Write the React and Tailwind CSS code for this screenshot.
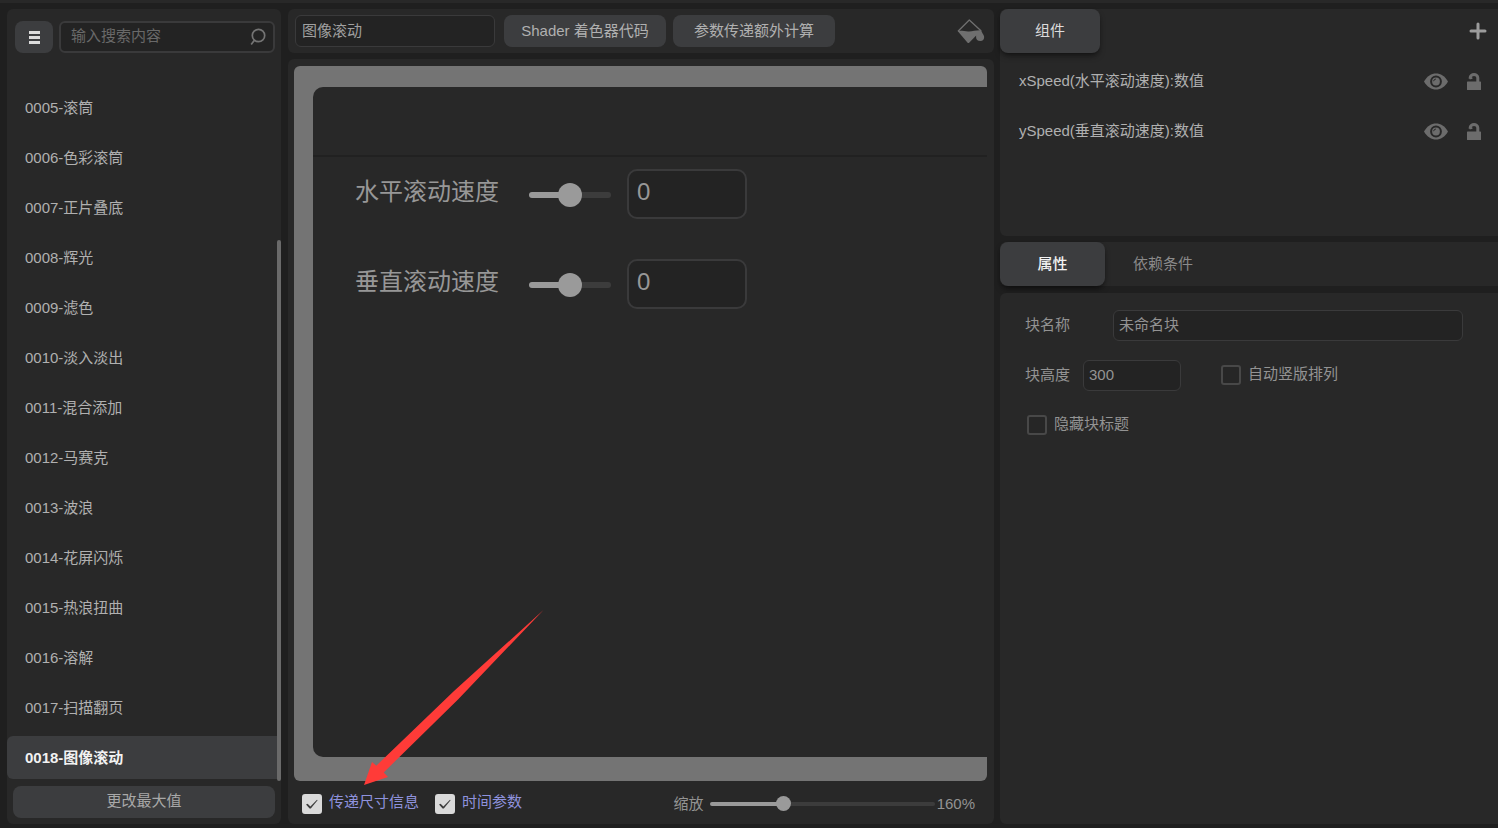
import React, { useState } from "react";

const SHADERS = [
  "0005-滚筒",
  "0006-色彩滚筒",
  "0007-正片叠底",
  "0008-辉光",
  "0009-滤色",
  "0010-淡入淡出",
  "0011-混合添加",
  "0012-马赛克",
  "0013-波浪",
  "0014-花屏闪烁",
  "0015-热浪扭曲",
  "0016-溶解",
  "0017-扫描翻页",
  "0018-图像滚动",
];

const PARAMS = [
  { id: "xSpeed", label: "水平滚动速度" },
  { id: "ySpeed", label: "垂直滚动速度" },
];

const MenuIcon = () => (
  <svg width="11" height="13" viewBox="0 0 11 13" fill="#dcdcdc" aria-hidden="true">
    <rect width="11" height="3" />
    <rect y="5" width="11" height="3" />
    <rect y="10" width="11" height="3" />
  </svg>
);

const SearchIcon = () => (
  <svg width="16" height="18" viewBox="0 0 16 18" fill="none" stroke="#747474" strokeWidth="1.7" aria-hidden="true">
    <circle cx="8.5" cy="7.5" r="6.2" />
    <path d="M4.4 12.2 L1.2 16.4" />
  </svg>
);

const BucketIcon = () => (
  <svg width="28" height="25" viewBox="0 0 28 25" aria-hidden="true">
    <path d="M1 12.2 L12.3 1 L24.2 12" fill="none" stroke="#6f6f6f" strokeWidth="1.3" strokeLinejoin="round" />
    <path
      d="M.6 12 C5 11.4 8 12.6 12 12.4 C16 12.2 19 11 24 11.2 L25.6 14.4 C28.4 17.6 27.2 22 23.4 22 C20 22 18.6 19.8 19.2 16.6 L12.4 23.6 Q11.4 24.6 10.4 23.6 Z"
      fill="#6f6f6f"
    />
  </svg>
);

const PlusIcon = () => (
  <svg width="18" height="18" viewBox="0 0 18 18" fill="none" stroke="#9c9c9c" strokeWidth="3" strokeLinecap="round" aria-hidden="true">
    <path d="M9 2 V16 M2 9 H16" />
  </svg>
);

const EyeIcon = () => (
  <svg width="24" height="17" viewBox="0 0 24 17" aria-hidden="true">
    <path d="M0 8.5 C3 3 7.5 .4 12 .4 S21 3 24 8.5 C21 14 16.5 16.6 12 16.6 S3 14 0 8.5 Z" fill="#6c6c6c" />
    <circle cx="12" cy="8.5" r="4.9" fill="#6c6c6c" stroke="#282828" strokeWidth="2" />
    <path d="M9.6 8.2 A2.6 2.6 0 0 1 11.9 6" fill="none" stroke="#282828" strokeWidth="1" />
  </svg>
);

const LockIcon = () => (
  <svg width="14" height="17" viewBox="0 0 14 17" aria-hidden="true">
    <path d="M3.2 5.8 V4.8 C3.2 .4 10.8 .4 10.8 4.8 V9" fill="none" stroke="#6c6c6c" strokeWidth="3" />
    <path d="M2.6 5.6 L5.4 5" stroke="#6c6c6c" strokeWidth="1.6" />
    <rect y="8.5" width="14" height="8.5" rx=".6" fill="#6c6c6c" />
  </svg>
);

const trackFill = (value, min, max) => {
  const pct = ((value - min) / (max - min)) * 100;
  return { background: `linear-gradient(to right, #9a9a9a ${pct}%, #3c3c3c ${pct}%)` };
};

const CheckOption = ({ id, label, defaultChecked = false, accent = false }) => (
  <div className="flex items-center gap-[7px]">
    <span className="relative flex size-5">
      <input
        id={id}
        type="checkbox"
        defaultChecked={defaultChecked}
        className="peer size-5 appearance-none rounded-[3px] border-2 border-[#484848] bg-[#262626] checked:border-[#dadada] checked:bg-[#dadada]"
      />
      <svg
        viewBox="0 0 20 20"
        className="pointer-events-none absolute inset-0 hidden size-5 peer-checked:block"
        fill="#3c3c3c"
        aria-hidden="true"
      >
        <path d="M4 10.6 L5.6 9.8 L8.4 12.4 L15 5.8 L15.6 6.3 L8.8 14.6 L7.6 14.6 Z" />
      </svg>
    </span>
    <label htmlFor={id} className={accent ? "pb-1 text-[#8f92dd]" : "pb-0.5 text-[#939393]"}>
      {label}
    </label>
  </div>
);

const ParamRow = ({ param }) => {
  const [value, setValue] = useState(0);

  return (
    <div className="flex h-[90px] items-start pl-[42px] text-2xl text-[#979797]">
      <label htmlFor={param.id} className="w-[174px] whitespace-nowrap pt-[7px]">
        {param.label}
      </label>
      <input
        id={param.id}
        type="range"
        min={-50}
        max={50}
        value={value}
        onChange={(e) => setValue(Number(e.target.value))}
        style={trackFill(value, -50, 50)}
        className="mt-[23px] h-1.5 w-[82px] appearance-none rounded-full [&::-webkit-slider-thumb]:size-6 [&::-webkit-slider-thumb]:appearance-none [&::-webkit-slider-thumb]:rounded-full [&::-webkit-slider-thumb]:bg-[#9a9a9a]"
      />
      <input
        type="text"
        aria-label={param.label}
        value={value}
        onChange={(e) => setValue(Number(e.target.value) || 0)}
        className="ml-4 h-[50px] w-[120px] rounded-[10px] border-2 border-[#3a3a3b] bg-[#232323] px-2 pb-1 outline-none"
      />
    </div>
  );
};

const Sidebar = () => {
  const [active, setActive] = useState("0018-图像滚动");
  const [search, setSearch] = useState("");

  return (
    <aside className="mr-px flex min-h-0 flex-col rounded-md bg-[#282828]">
      <div className="flex gap-1.5 pt-3 pr-1.5 pb-1.5 pl-2">
        <button aria-label="菜单" className="flex h-8 w-[38px] items-center justify-center rounded-lg bg-[#3c3d3f]">
          <MenuIcon />
        </button>
        <div className="flex h-8 min-w-0 flex-1 items-center rounded-md border-2 border-[#3a3a3b] bg-[#232323] pr-[7px] pl-2.5">
          <input
            type="text"
            aria-label="输入搜索内容"
            placeholder="输入搜索内容"
            value={search}
            onChange={(e) => setSearch(e.target.value)}
            className="min-w-0 flex-1 bg-transparent pb-0.5 text-[#b0b0b0] outline-none placeholder:text-[#696969]"
          />
          <SearchIcon />
        </div>
      </div>

      {/* Shader list */}
      <div className="flex min-h-0 flex-1">
        <ul className="flex min-w-0 flex-1 flex-col justify-end gap-[7px] overflow-hidden pb-0.5">
          {SHADERS.filter((s) => s.includes(search)).map((name) => (
            <li key={name} className="shrink-0">
              <button
                onClick={() => setActive(name)}
                className={`h-[43px] w-full rounded-l-md pl-[18px] text-left ${
                  active === name ? "bg-[#3c3d3f] font-bold text-[#f2f2f2]" : "text-[#b0b0b0]"
                }`}
              >
                {name}
              </button>
            </li>
          ))}
        </ul>
        <div className="flex w-1 flex-col justify-end">
          <div className="h-3/4 rounded-full bg-[#6a6a6a]" />
        </div>
      </div>

      <div className="px-1.5 pt-[5px] pb-1.5">
        <button className="h-8 w-full rounded-lg bg-[#3c3d3f] pb-0.5 text-[#a8a8a8]">更改最大值</button>
      </div>
    </aside>
  );
};

const Editor = () => {
  const [name, setName] = useState("图像滚动");
  const [zoom, setZoom] = useState(160);

  return (
    <main className="relative flex min-h-0 min-w-0 flex-col gap-1.5">
      {/* Toolbar */}
      <div className="flex h-11 items-center rounded-md bg-[#282828] pr-[9px] pl-[7px]">
        <input
          type="text"
          aria-label="名称"
          value={name}
          onChange={(e) => setName(e.target.value)}
          className="h-8 w-[200px] rounded-md border border-[#3a3a3b] bg-[#232323] px-1.5 pb-1 text-[#a0a0a0] outline-none"
        />
        <button className="ml-[9px] h-8 w-[162px] rounded-lg bg-[#3c3d3f] text-[#b0b0b0]">Shader 着色器代码</button>
        <button className="ml-[7px] h-8 w-[162px] rounded-lg bg-[#3c3d3f] text-[#b0b0b0]">参数传递额外计算</button>
        <button aria-label="填充颜色" className="ml-auto">
          <BucketIcon />
        </button>
      </div>

      {/* Canvas */}
      <div className="flex min-h-0 flex-1 flex-col rounded-md bg-[#282828] pt-[7px] pr-[7px] pl-1.5">
        <div className="flex min-h-0 flex-1 rounded-md bg-[#747474] pt-[21px] pb-6 pl-[19px]">
          <div className="flex-1 overflow-hidden rounded-l-[10px] bg-[#282828]">
            <div className="h-[70px] border-b-2 border-[#212121]" />
            <div className="pt-3">
              {PARAMS.map((p) => (
                <ParamRow key={p.id} param={p} />
              ))}
            </div>
          </div>
        </div>

        <div className="flex h-[43px] items-center pt-0.5 pr-3 pl-2">
          <div className="flex gap-4">
            <CheckOption id="pass-size" label="传递尺寸信息" defaultChecked accent />
            <CheckOption id="time-param" label="时间参数" defaultChecked accent />
          </div>
          <div className="ml-auto flex items-center text-[#939393]">
            <label htmlFor="zoom">缩放</label>
            <input
              id="zoom"
              type="range"
              min={50}
              max={400}
              value={zoom}
              onChange={(e) => setZoom(Number(e.target.value))}
              style={trackFill(zoom, 50, 400)}
              className="ml-1.5 h-1 w-[225px] appearance-none rounded-full [&::-webkit-slider-thumb]:size-[15px] [&::-webkit-slider-thumb]:appearance-none [&::-webkit-slider-thumb]:rounded-full [&::-webkit-slider-thumb]:bg-[#9a9a9a]"
            />
            <span className="ml-0.5">{zoom}%</span>
          </div>
        </div>
      </div>

      {/* Arrow pointing at the size option */}
      <svg
        className="pointer-events-none absolute bottom-[39px] left-[76px]"
        width="180"
        height="175"
        viewBox="0 0 180 175"
        fill="#ff3b38"
        aria-hidden="true"
      >
        <path d="M0 175 L8 152 L12.3 155.7 L90 81 L179.5 0 L94 89.5 L19.7 162.4 L24 167 Z" />
      </svg>
    </main>
  );
};

const Inspector = () => (
  <section className="flex min-h-0 flex-col text-[#939393]">
    {/* Components */}
    <div className="flex h-[227px] flex-col rounded-l-md bg-[#282828]">
      <div className="flex h-[47px] items-start justify-between pr-[11px]">
        <button className="h-11 w-[100px] rounded-lg bg-[#3c3d3f] text-[#dcdcdc] shadow-md shadow-black/40">组件</button>
        <button aria-label="添加组件" className="flex h-11 items-center">
          <PlusIcon />
        </button>
      </div>
      <ul>
        <li className="flex h-[50px] items-center pr-[17px] pl-[19px] text-[#b0b0b0]">
          <span className="flex-1">xSpeed(水平滚动速度):数值</span>
          <button aria-label="显示"><EyeIcon /></button>
          <button aria-label="锁定" className="ml-[19px]"><LockIcon /></button>
        </li>
        <li className="flex h-[50px] items-center pr-[17px] pl-[19px] text-[#b0b0b0]">
          <span className="flex-1">ySpeed(垂直滚动速度):数值</span>
          <button aria-label="显示"><EyeIcon /></button>
          <button aria-label="锁定" className="ml-[19px]"><LockIcon /></button>
        </li>
      </ul>
    </div>

    {/* Tabs */}
    <div className="mt-1.5 flex h-11 rounded-l-md bg-[#282828]">
      <button className="h-11 w-[105px] rounded-lg bg-[#3c3d3f] font-medium text-[#f2f2f2] shadow-md shadow-black/40">
        属性
      </button>
      <button className="w-[116px] text-[#8a8a8a]">依赖条件</button>
    </div>

    {/* Properties */}
    <div className="mt-[7px] flex-1 rounded-l-md bg-[#282828] pt-[7px] pr-[35px] pl-[25px]">
      <div className="flex h-[50px] items-center">
        <label htmlFor="block-name" className="w-[88px]">块名称</label>
        <input
          id="block-name"
          type="text"
          defaultValue="未命名块"
          className="h-[31px] min-w-0 flex-1 rounded-md border border-[#3a3a3b] bg-[#232323] px-[5px] pb-1 outline-none"
        />
      </div>
      <div className="flex h-[50px] items-center">
        <label htmlFor="block-height" className="w-[58px]">块高度</label>
        <input
          id="block-height"
          type="text"
          defaultValue="300"
          className="mr-10 h-[31px] w-[98px] rounded-md border border-[#3a3a3b] bg-[#232323] px-[5px] pb-0.5 outline-none"
        />
        <CheckOption id="auto-vertical" label="自动竖版排列" />
      </div>
      <div className="flex h-[50px] items-center pl-0.5">
        <CheckOption id="hide-title" label="隐藏块标题" />
      </div>
    </div>
  </section>
);

const App = () => {
  return (
    <div className="flex h-screen flex-col bg-[#1f1f1f] font-['Liberation_Sans','Noto_Sans_CJK_SC',sans-serif] text-[15px] leading-5">
      <div className="h-[3px] shrink-0 bg-[#282828]" />
      <div className="grid min-h-0 flex-1 grid-cols-[275px_minmax(0,1fr)_498px] gap-1.5 pt-1.5 pb-1 pl-[7px]">
        <Sidebar />
        <Editor />
        <Inspector />
      </div>
    </div>
  );
};

export default App;
